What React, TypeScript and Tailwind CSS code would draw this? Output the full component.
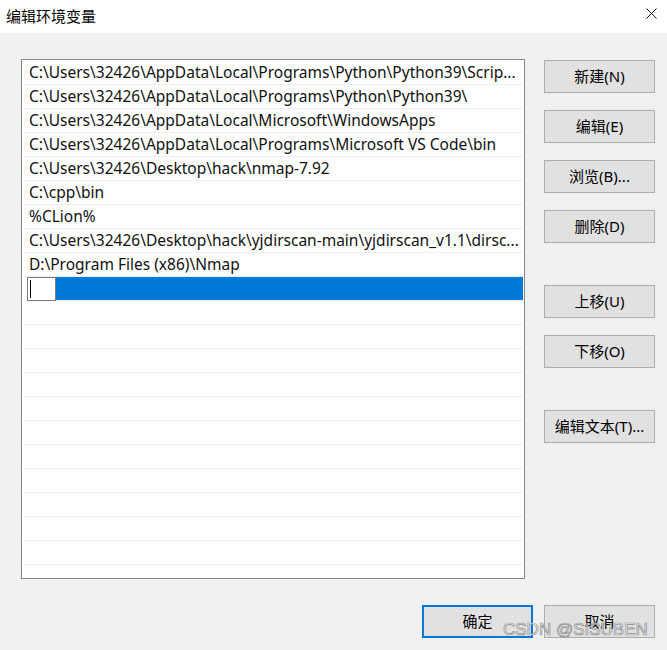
const rows = [
  "C:\\Users\\32426\\AppData\\Local\\Programs\\Python\\Python39\\Scrip...",
  "C:\\Users\\32426\\AppData\\Local\\Programs\\Python\\Python39\\",
  "C:\\Users\\32426\\AppData\\Local\\Microsoft\\WindowsApps",
  "C:\\Users\\32426\\AppData\\Local\\Programs\\Microsoft VS Code\\bin",
  "C:\\Users\\32426\\Desktop\\hack\\nmap-7.92",
  "C:\\cpp\\bin",
  "%CLion%",
  "C:\\Users\\32426\\Desktop\\hack\\yjdirscan-main\\yjdirscan_v1.1\\dirsc...",
  "D:\\Program Files (x86)\\Nmap",
]

const Button = ({ label, className = "" }: { label: string; className?: string }) => (
  <div
    className={`w-[111px] h-[33px] flex items-center justify-center bg-[#e1e1e1] border border-[#adadad] text-[15px] text-black ${className}`}
  >
    {label}
  </div>
)

export default function App() {
  const empty = Array.from({ length: 12 })
  return (
    <div className="relative w-[667px] h-[650px] bg-[#f0f0f0] overflow-hidden font-['Noto_Sans','Noto_Sans_CJK_SC',sans-serif] text-black">
      <div className="h-[33px] bg-white flex items-center justify-between pl-[6px] pr-[10px]">
        <span className="text-[15px] leading-none">编辑环境变量</span>
        <svg width="11" height="11" viewBox="0 0 11 11" className="mb-[6px]">
          <path d="M0.5 0.5 L10.5 10.5 M10.5 0.5 L0.5 10.5" stroke="#111" strokeWidth="1" fill="none" />
        </svg>
      </div>

      <div className="flex pt-[26px] pl-[21px]">
        <div className="w-[504px] h-[520px] border border-[#828790] bg-white p-px overflow-hidden">
          {rows.map((r, i) => (
            <div
              key={i}
              className="h-[24px] border-b border-[#f0f0f0] pl-[6px] flex items-center text-[15.5px] text-[#111] whitespace-nowrap overflow-hidden"
            >
              {r}
            </div>
          ))}
          <div className="h-[24px] border-b border-[#f0f0f0] flex">
            <div className="w-[4px]" />
            <div className="w-[29px] h-[24px] border border-[#7a7a7a] bg-white flex items-center pl-[2px]">
              <div className="w-px h-[18px] bg-black" />
            </div>
            <div className="flex-1 h-[23px] bg-[#0078d7]" />
          </div>
          {empty.map((_, i) => (
            <div key={i} className="h-[24px] border-b border-[#f0f0f0]" />
          ))}
        </div>

        <div className="ml-[19px] mt-px flex flex-col">
          <Button label="新建(N)" />
          <Button label="编辑(E)" className="mt-[17px]" />
          <Button label="浏览(B)..." className="mt-[17px]" />
          <Button label="删除(D)" className="mt-[17px]" />
          <Button label="上移(U)" className="mt-[42px]" />
          <Button label="下移(O)" className="mt-[17px]" />
          <Button label="编辑文本(T)..." className="mt-[42px]" />
        </div>
      </div>

      <div className="flex justify-end gap-[11px] pr-[12px] mt-[26px]">
        <div className="w-[111px] h-[33px] flex items-center justify-center bg-[#e1e1e1] border-2 border-[#0078d7] text-[15px]">
          确定
        </div>
        <Button label="取消" />
      </div>

      <div className="absolute left-[503px] top-[621px] text-[17px] leading-none text-white/70 [-webkit-text-stroke:0.7px_#8c8c8c] font-['Liberation_Sans',sans-serif]">
        CSDN @SISUBEN
      </div>
    </div>
  )
}
